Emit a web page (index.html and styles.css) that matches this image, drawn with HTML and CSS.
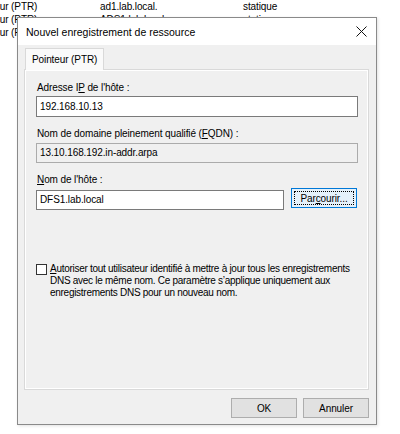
FILE: index.html
```html
<!DOCTYPE html>
<html lang="fr">
<head>
<meta charset="utf-8">
<link rel="stylesheet" href="styles.css">
</head>
<body>
<div class="bglist">
  <div class="bgrow"><span class="c1">Pointeur (PTR)</span><span class="c2">ad1.lab.local.</span><span class="c3">statique</span></div>
  <div class="bgrow"><span class="c1">Pointeur (PTR)</span><span class="c2">ADS1.lab.local.</span><span class="c3">statique</span></div>
  <div class="bgrow"><span class="c1">Pointeur (PTR)</span><span class="c2">DFS1.lab.local.</span><span class="c3">statique</span></div>
</div>
<div class="dialog">
  <div class="titlebar">
    <span class="title">Nouvel enregistrement de ressource</span>
    <svg class="close" width="11" height="11" viewBox="0 0 11 11"><path d="M0.5 0.5 L10.5 10.5 M10.5 0.5 L0.5 10.5" stroke="#111" stroke-width="1" fill="none"/></svg>
  </div>
  <div class="body">
    <div class="tabs"><div class="tab">Pointeur (PTR)</div></div>
    <div class="panel">
      <div class="label first">Adresse I<u>P</u> de l'hôte :</div>
      <div class="input">192.168.10.13</div>
      <div class="label">Nom de domaine pleinement qualifié (<u>F</u>QDN) :</div>
      <div class="input readonly">13.10.168.192.in-addr.arpa</div>
      <div class="label"><u>N</u>om de l'hôte :</div>
      <div class="hostrow">
        <div class="input host">DFS1.lab.local</div>
        <div class="btn browse"><span class="focus">Par<u>c</u>ourir...</span></div>
      </div>
      <div class="check">
        <span class="box"></span>
        <span class="ctext"><u>A</u>utoriser tout utilisateur identifié à mettre à jour tous les enregistrements DNS avec le même nom. Ce paramètre s’applique uniquement aux enregistrements DNS pour un nouveau nom.</span>
      </div>
    </div>
    <div class="footer">
      <div class="btn">OK</div>
      <div class="btn">Annuler</div>
    </div>
  </div>
</div>
</body>
</html>
```
FILE: styles.css
```css
* { box-sizing: border-box; }
html, body { margin: 0; padding: 0; }
body {
  width: 400px; height: 434px; background: #fff; position: relative; overflow: hidden;
  font-family: "Liberation Sans", Arial, sans-serif; font-size: 10px; letter-spacing: -0.1px; color: #000;
}
.bgrow { display: flex; height: 13px; line-height: 13px; white-space: nowrap; }
.bgrow .c1 { width: 100px; margin-left: -28px; flex: none; }
.bgrow .c2 { width: 143px; margin-left: 28px; flex: none; }
.bgrow .c3 { flex: none; }

.dialog {
  position: absolute; left: 17px; top: 17px; width: 360px; height: 408px;
  border: 1px solid #8a8a8a; background: #f0f0f0;
  display: flex; flex-direction: column;
  box-shadow: 1px 1px 3px rgba(0,0,0,0.12);
}
.titlebar {
  height: 27px; background: #fff; display: flex; align-items: center;
  padding: 0 9px 0 8px; justify-content: space-between;
}
.title { font-size: 10.5px; letter-spacing: 0; }
.close { display: block; }

.body { flex: 1; display: flex; flex-direction: column; padding: 3px 7px 6px 6px; }
.tabs { display: flex; height: 22px; padding-left: 1px; }
.tab {
  border: 1px solid #d9d9d9; border-bottom: none; background: #fafafa;
  padding: 0 6px; line-height: 21px; height: 22px; position: relative; z-index: 1;
}
.panel {
  flex: 1; margin-top: -1px; border: 1px solid #d9d9d9; background: #f0f0f0;
  box-shadow: inset 1px 1px 0 #fff, inset -1px -1px 0 #fff;
  padding: 11px 10px 0 11px; display: flex; flex-direction: column;
}
.label { line-height: 13px; height: 13px; padding-left: 1px; margin-top: 10px; }
.label.first { margin-top: 0; }
.label + .input, .label + .hostrow { margin-top: 2px; }
.input {
  height: 21px; border: 1px solid #7a7a7a; background: #fff;
  padding: 0 3px; line-height: 19px;
}
.input.readonly { background: #f0f0f0; border-color: #ababab; height: 20px; line-height: 18px; margin-top: 3px; }
.hostrow { display: flex; gap: 7px; align-items: flex-start; }
.input.host { width: 248px; margin-top: 2px; height: 20px; line-height: 18px; }
.btn {
  border: 1px solid #adadad; background: #e1e1e1; height: 20px;
  display: flex; align-items: center; justify-content: center;
}
.browse {
  width: 66px; border-color: #0078d7; background: #e5f1fb; padding: 2px;
}
.browse .focus {
  flex: 1; height: 100%; border: 1px dotted #000; display: flex; align-items: center; justify-content: center;
}
.check { display: flex; margin-top: 53px; }
.box { width: 11px; height: 11px; border: 1px solid #333; background: #fff; flex: none; margin-top: 1px; margin-right: 3px; }
.ctext { line-height: 12px; width: 310px; letter-spacing: -0.28px; }
.footer { display: flex; justify-content: flex-end; gap: 6px; margin-top: 8px; }
.footer .btn { width: 66px; }
```
